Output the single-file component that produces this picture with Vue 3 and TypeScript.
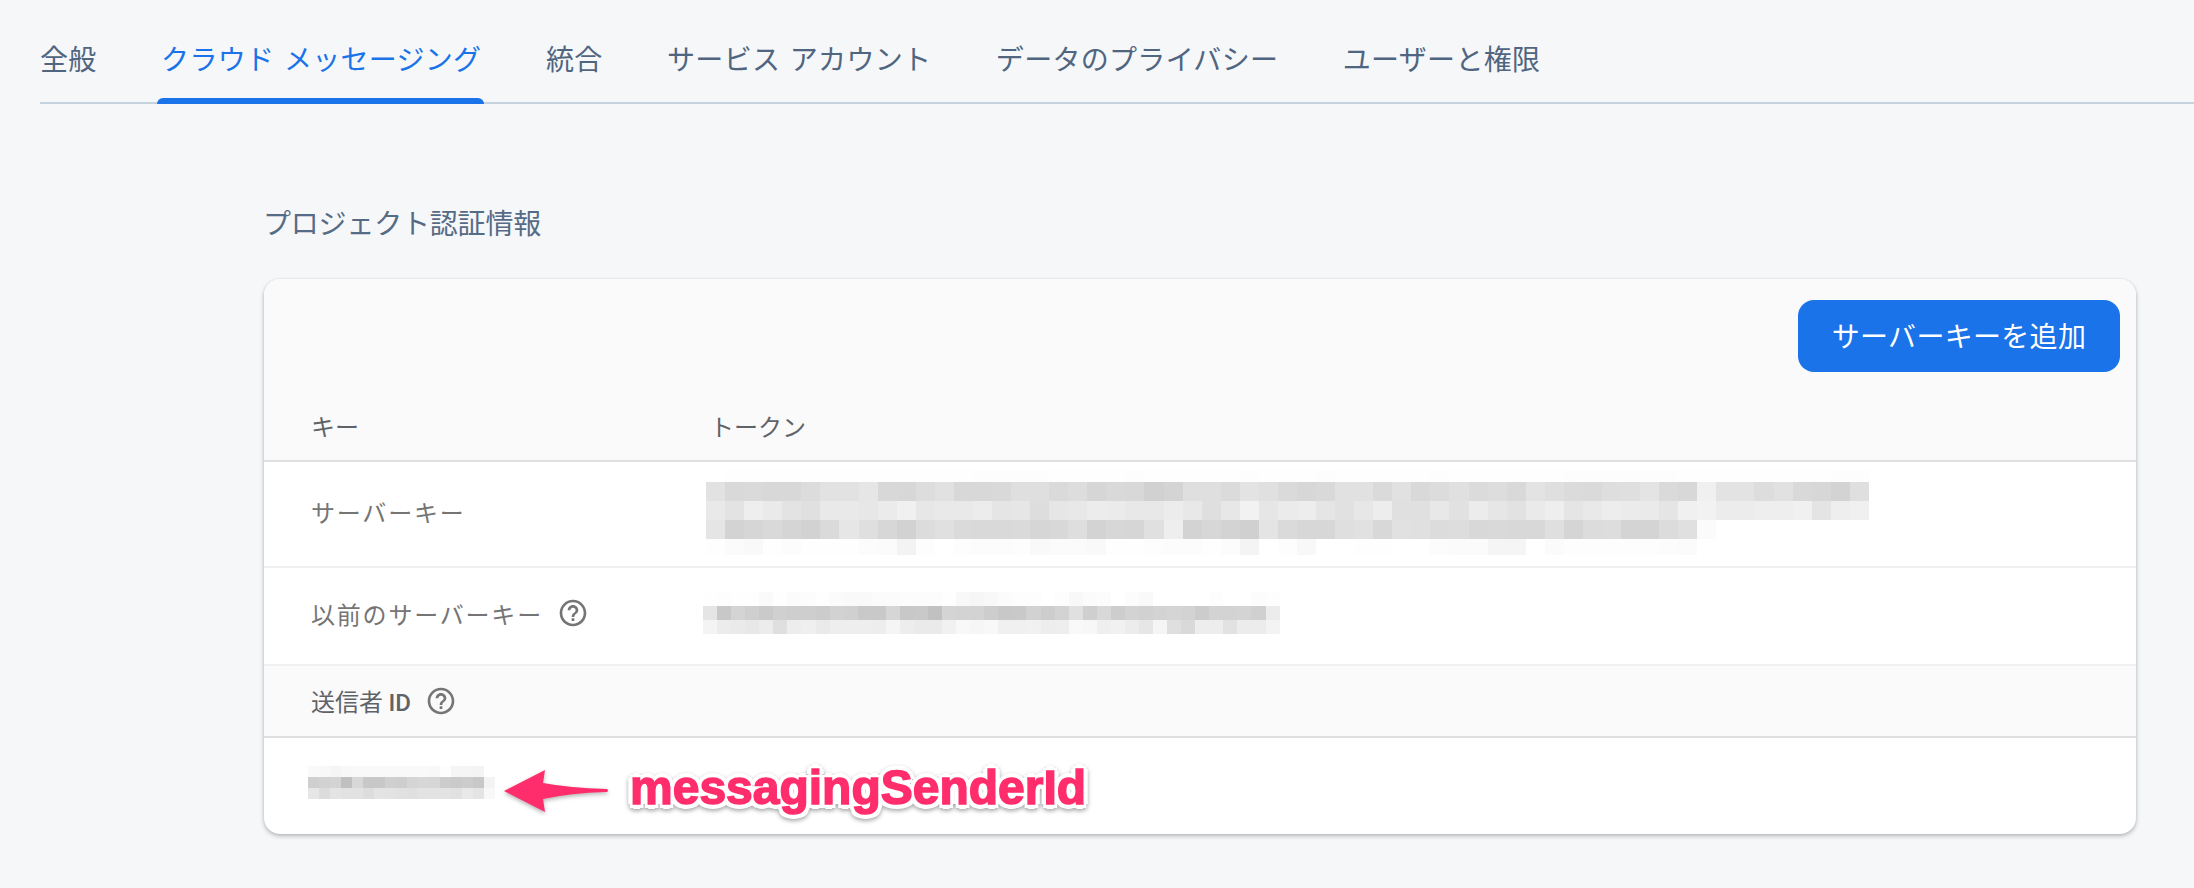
<script setup lang="ts">
const tabs = ['全般', 'クラウド メッセージング', '統合', 'サービス アカウント', 'データのプライバシー', 'ユーザーと権限']

interface Line { height: number; cells: string[] }

function line(height: number, data: string): Line {
  return { height, cells: data.trim().split(/\s+/).map((v) => '#' + v + v + v) }
}

const tokenLines: Line[] = [
  line(12, 'ff fe fe fe fe fe fe fe fe fe fe fe fe fe fd fd fd fd fe fe fe fe fd fe fe fe fe fe fd fe fe fe fd fe fe fe fe fe fd fe fe fe fe fe fe fd fd fd fd fd fd fe fe fe fe fe fe fe fe fd fd'),
  line(19, 'e2 d9 da d8 d8 dc e2 e2 e6 d8 d7 dd e1 d8 d8 d9 df df da dd d6 d9 d8 d1 d4 df df db e3 e0 da d7 d9 e1 e1 da e1 d9 dc e0 db dd d9 e3 df db da de df e4 da d8 f0 e3 e3 dd e1 d9 d7 d3 df'),
  line(19, 'e9 e3 ee ea e3 e0 e9 e9 e7 eb f0 e7 e9 e9 ec e5 e6 dd e6 e8 ec eb e8 e8 ec e8 df e7 f2 e6 eb ed e5 e1 e7 ed e0 e0 e8 e1 ec e6 e2 ea ee e5 e9 ed eb ea e5 f0 f2 ec ec ee ee f0 e4 ee f0'),
  line(19, 'e5 d3 d6 d9 d5 d2 da e6 df d7 d2 dc e0 da d9 d9 da d6 d8 de d3 d7 d6 e0 ee d3 d7 d3 d0 e4 da d7 d7 df e1 d8 e1 e0 dc dd d8 d9 d8 d8 df d5 dc dd d4 d4 dc e0 fb ff ff ff ff ff ff ff ff'),
  line(16, 'fe fb f9 fe fc fe fe fe fc fb f3 fd ff fd fc fc fd f9 fb fb f9 fe fe fd fc fc fe fc f4 ff fd f8 ff ff fe fe ff ff fc fb fb f5 f5 ff fb fd fd fd fd fd fc fb'),
]

const oldKeyLines: Line[] = [
  line(14, 'fe fd fe fe fa fe fb fc fe fb f9 f9 fb fb fc fc fc fe f8 f6 f8 fb fd fd ff fd f8 fb fc ff fc f9 ff ff ff ff fd ff ff fc fd ff'),
  line(14, 'e5 c8 d4 cf ca d0 ce ce cc d2 d0 c9 c9 d6 c8 c9 c1 d4 d3 d3 cd c8 c9 d2 cd d3 e0 cf d8 cd d3 d1 d3 d5 d3 cc d3 d3 d4 d0 ec'),
  line(14, 'f4 ec ea e8 ec df ed ef ea ee ee ee ed f5 ed ea ea f1 f8 f6 f8 f0 f0 f1 ed ee f9 f7 ef f1 ec e6 f5 df d9 ed ed e2 ec ec f3'),
]

const senderLines: Line[] = [
  line(11, 'f9 f8 f5 f8 f9 f9 f9 f9 f9 f9 f9 f8 fd f5 f5 f4 ff'),
  line(11, 'cf d2 d4 c0 d8 c8 c8 d0 ce d5 d7 d6 cc ca cc c8 f3'),
  line(11, 'e6 dc e4 e2 e2 dd e4 e3 e1 e0 e3 e3 e3 e1 e9 e4 f8'),
]

const helpPath =
  'M11 18h2v-2h-2v2zm1-16C6.48 2 2 6.48 2 12s4.48 10 10 10 10-4.48 10-10S17.52 2 12 2zm0 18c-4.41 0-8-3.59-8-8s3.59-8 8-8 8 3.59 8 8-3.59 8-8 8zm0-14c-2.21 0-4 1.79-4 4h2c0-1.1.9-2 2-2s2 .9 2 2c0 2-3 1.75-3 5h2c0-2.25 3-2.5 3-5 0-2.21-1.79-4-4-4z'
</script>

<template>
  <div class="page">
    <nav class="tabs">
      <div v-for="(t, i) in tabs" :key="t" class="tab" :class="{ active: i === 1 }">{{ t }}</div>
    </nav>

    <main class="content">
      <h2 class="title">プロジェクト認証情報</h2>
      <section class="card">
        <div class="toolbar">
          <button class="add">サーバーキーを追加</button>
        </div>

        <div class="grid head">
          <span class="label">キー</span>
          <span class="token-head">トークン</span>
        </div>

        <div class="grid row-server">
          <span class="label muted">サーバーキー</span>
          <div class="mosaic token">
            <div v-for="(l, i) in tokenLines" :key="i" class="m-line" :style="{ height: l.height + 'px' }">
              <i v-for="(c, j) in l.cells" :key="j" :style="{ background: c }"></i>
            </div>
          </div>
        </div>

        <div class="grid row-old">
          <span class="label muted with-help">
            <span class="wide">以前のサーバーキー</span>
            <svg class="help" viewBox="0 0 24 24"><path :d="helpPath" /></svg>
          </span>
          <div class="mosaic old">
            <div v-for="(l, i) in oldKeyLines" :key="i" class="m-line" :style="{ height: l.height + 'px' }">
              <i v-for="(c, j) in l.cells" :key="j" :style="{ background: c }"></i>
            </div>
          </div>
        </div>

        <div class="sender-head">
          <span class="sender-label">送信者 <b>ID</b></span>
          <svg class="help" viewBox="0 0 24 24"><path :d="helpPath" /></svg>
        </div>

        <div class="sender-row">
          <div class="mosaic sender">
            <div v-for="(l, i) in senderLines" :key="i" class="m-line" :style="{ height: l.height + 'px' }">
              <i v-for="(c, j) in l.cells" :key="j" :style="{ background: c }"></i>
            </div>
          </div>
          <svg class="arrow" viewBox="0 0 116 52" width="116" height="52">
            <path d="M4 23 L45 2 L43 15 Q70 20 107 21 Q109 22.5 107 24 Q70 25 43 31 L45 44 Z" fill="#ff2d6c" />
          </svg>
          <span class="note">messagingSenderId</span>
        </div>
      </section>
    </main>
  </div>
</template>

<style>
html, body { margin: 0; background: #f6f7f9; }
</style>

<style scoped>
.page {
  width: 2194px;
  height: 888px;
  overflow: hidden;
  background: #f6f7f9;
  font-family: "Noto Sans CJK JP", "Liberation Sans", sans-serif;
  font-weight: 400;
}
.tabs {
  display: flex;
  margin-left: 40px;
  padding-top: 39px;
  height: 63px;
  border-bottom: 2px solid #c5d2e0;
}
.tab {
  position: relative;
  font-size: 28px;
  line-height: 38px;
  letter-spacing: 0.3px;
  word-spacing: 3px;
  color: #4f6580;
  margin-right: 64.5px;
  white-space: nowrap;
  height: 63px;
}
.tab.active { color: #1a73e8; }
.tab.active::after {
  content: "";
  position: absolute;
  left: -4px;
  right: -3px;
  bottom: -2px;
  height: 6px;
  background: #1a73e8;
  border-radius: 6px 6px 0 0;
}
.content { padding: 98px 58px 0 264px; }
.title {
  margin: 0 0 37px -1px;
  font-size: 28px;
  line-height: 40px;
  font-weight: 400;
  letter-spacing: -0.2px;
  color: #566b85;
}
.card {
  background: #fff;
  border-radius: 16px;
  box-shadow: 0 2px 4px rgba(60, 64, 67, 0.35), 0 0 2px rgba(60, 64, 67, 0.12);
  overflow: hidden;
}
.toolbar {
  background: #fafafa;
  display: flex;
  justify-content: flex-end;
  padding: 21px 16px 0;
}
.add {
  width: 322px;
  height: 72px;
  border: 0;
  border-radius: 16px;
  background: #1a73e8;
  color: #fff;
  font: inherit;
  font-size: 28px;
  letter-spacing: 0.3px;
  padding: 0 0 2px;
}
.grid {
  display: grid;
  grid-template-columns: 448px 1fr;
  font-size: 24px;
}
.head {
  box-sizing: border-box;
  padding-top: 18px;
  align-items: center;
  background: #fafafa;
  border-bottom: 2px solid #e0e0e0;
  height: 90px;
  color: #5f6368;
}
.token-head { margin-left: -2px; }
.label { padding-left: 47px; white-space: nowrap; }
.muted { color: #757575; }
.row-server {
  height: 106px;
  box-sizing: border-box;
  padding-top: 8px;
  border-bottom: 2px solid #f0f0f0;
}
.row-server .label { align-self: center; margin-top: -13px; letter-spacing: 1.8px; }
.row-old {
  height: 98px;
  box-sizing: border-box;
  padding-top: 23px;
  border-bottom: 2px solid #f0f0f0;
}
.wide { letter-spacing: 1.8px; }
.with-help {
  display: flex;
  align-items: center;
  gap: 14px;
  height: 44px;
}
.help { width: 32px; height: 32px; fill: #757575; flex: none; }
.mosaic { display: flex; flex-direction: column; }
.row-old .mosaic { margin-top: 1px; }
.m-line { display: flex; }
.m-line i { display: block; flex: none; height: 100%; }
.token { margin-left: -6px; }
.token i { width: 19.07px; }
.old { margin-left: -9px; }
.old i { width: 14.07px; }
.sender i { width: 11px; }
.sender-head {
  height: 72px;
  box-sizing: border-box;
  display: flex;
  align-items: center;
  gap: 14px;
  padding-left: 47px;
  background: #fafafa;
  border-bottom: 2px solid #e0e0e0;
  font-size: 24px;
  color: #5f6368;
}
.sender-label { margin-top: -2px; }
.sender-label b { font-family: Roboto, sans-serif; font-weight: 500; }
.sender-row {
  height: 96px;
  box-sizing: border-box;
  display: flex;
  align-items: flex-start;
  padding: 28px 0 0 44px;
}
.arrow {
  flex: none;
  margin: 2px 0 0 5px;
  overflow: visible;
  filter: drop-shadow(0 2px 2px rgba(0, 0, 0, 0.3));
}
.note {
  margin: -6px 0 0 14px;
  font-family: "Liberation Sans", Arial, sans-serif;
  font-weight: 700;
  font-size: 48px;
  line-height: 56px;
  color: #ff2d6c;
  -webkit-text-stroke: 1.5px #ff2d6c;
  text-shadow:
    5px 0 0 #fff, -5px 0 0 #fff, 0 5px 0 #fff, 0 -5px 0 #fff,
    3.5px 3.5px 0 #fff, -3.5px 3.5px 0 #fff, 3.5px -3.5px 0 #fff, -3.5px -3.5px 0 #fff;
  filter: drop-shadow(0 2px 2px rgba(0, 0, 0, 0.35));
}
</style>
